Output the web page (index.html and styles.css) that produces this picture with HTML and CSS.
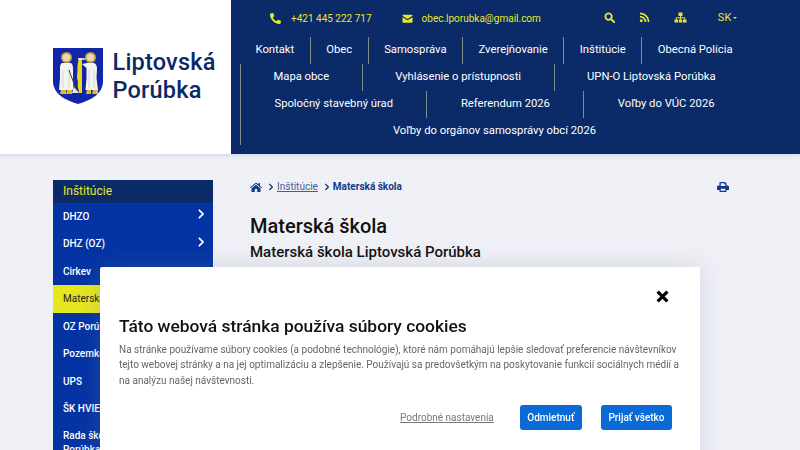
FILE: index.html
```html
<!DOCTYPE html>
<html lang="sk">
<head>
<meta charset="utf-8">
<title>Materská škola</title>
<link rel="stylesheet" href="styles.css">
</head>
<body>
<header class="site-header">
  <a class="brand">
    <svg class="crest" viewBox="0 0 50 56" width="50" height="56" aria-hidden="true">
      <path d="M0 0H50V33C50 46 38 52 25 56C12 52 0 46 0 33Z" fill="#1426a8"/>
      <circle cx="13.500" cy="9.500" r="5.500" fill="#b9a24a"/><circle cx="13.500" cy="9.500" r="3.800" fill="#ecd9a8"/>
      <circle cx="37.500" cy="9.500" r="5.500" fill="#b9a24a"/><circle cx="37.500" cy="9.500" r="3.800" fill="#ecd9a8"/>
      <path d="M9 15H18Q20 16 20 21L20 30L20.500 42H6L7 30L7 20Q7 16 9 15Z" fill="#f4f4ee"/>
      <path d="M34 15H41Q44 16 44 21L43.500 30L45 42H32.500L33.500 30L33.500 20L29 16L34 15Z" fill="#f4f4ee"/>
      <path d="M10 22V40M16 22V40M36 22V40M41 22V40" stroke="#c9c9bd" stroke-width=".7"/>
      <path d="M8 42H13V46H7ZM14 42H19V46H13ZM34 42H38V46H33ZM40 42H45V46H39Z" fill="#e0bd1c"/>
      <path d="M26 10H29V45H26C25.500 41 24 38 25 34C23.500 30 24 27 24.500 23C24 18 25 14 26 10Z" fill="#e8d81c"/>
      <path d="M25 11H32" stroke="#f4f4ee" stroke-width="1.500"/>
      <path d="M16 22L24 44" stroke="#44402a" stroke-width="1"/>
      <path d="M21 39L26 45H19Z" fill="#e6e6e2"/>
    </svg>
    <span class="brand-name">Liptovská<br>Porúbka</span>
  </a>
  <div class="header-panel">
    <div class="topbar">
      <span class="contact">
        <svg class="ico flip" viewBox="0 0 512 512"><path d="M493.4 24.6l-104-24c-11.3-2.6-22.9 3.3-27.5 13.9l-48 112c-4.2 9.8-1.4 21.3 6.9 28l60.6 49.6c-36 76.7-98.9 140.5-177.2 177.2l-49.6-60.6c-6.8-8.3-18.2-11.1-28-6.9l-112 48C3.9 366.5-2 378.1.6 389.4l24 104C27.1 504.2 36.7 512 48 512c256.1 0 464-207.5 464-464 0-11.2-7.7-20.9-18.6-23.4z"/></svg>
        <span>+421 445 222 717</span>
      </span>
      <span class="contact contact-mail">
        <svg class="ico" viewBox="0 0 24 24"><path d="M2 4H22Q23 4 23 6L12 13L1 6Q1 4 2 4ZM1 9L12 16L23 9V19Q23 21 21 21H3Q1 21 1 19Z"/></svg>
        <span>obec.lporubka@gmail.com</span>
      </span>
      <span class="tools">
        <svg class="ico" viewBox="0 0 24 24"><circle cx="10" cy="10" r="7" fill="none" stroke="currentColor" stroke-width="4"/><path d="M15 15L22 22" stroke="currentColor" stroke-width="4.500" stroke-linecap="round"/></svg>
        <svg class="ico" viewBox="0 0 24 24"><circle cx="5" cy="19" r="3.200"/><path d="M2 10A12 12 0 0 1 14 22M2 3A19 19 0 0 1 21 22" fill="none" stroke="currentColor" stroke-width="3.600"/></svg>
        <svg class="ico ico-wide" viewBox="0 0 26 22"><path d="M9 1H17V8H9ZM1 15H8V21H1ZM9.500 15H16.500V21H9.500ZM18 15H25V21H18Z"/><path d="M13 8V15M4.500 15V11.500H21.500V15" fill="none" stroke="currentColor" stroke-width="2"/></svg>
        <span class="lang">SK</span>
      </span>
    </div>
    <ul class="main-nav">
      <li>Kontakt</li><li>Obec</li><li>Samospráva</li><li>Zverejňovanie</li><li>Inštitúcie</li><li>Obecná Polícia</li>
      <li>Mapa obce</li><li>Vyhlásenie o prístupnosti</li><li>UPN-O Liptovská Porúbka</li>
      <li>Spoločný stavebný úrad</li><li>Referendum 2026</li><li>Voľby do VÚC 2026</li>
      <li>Voľby do orgánov samosprávy obcí 2026</li>
    </ul>
  </div>
</header>

<div class="page">
  <aside class="side">
    <div class="side-title">Inštitúcie</div>
    <ul class="side-list">
      <li>DHZO<svg class="chev" viewBox="0 0 8 12"><path d="M2 1L7 6L2 11" fill="none" stroke="currentColor" stroke-width="2"/></svg></li>
      <li>DHZ (OZ)<svg class="chev" viewBox="0 0 8 12"><path d="M2 1L7 6L2 11" fill="none" stroke="currentColor" stroke-width="2"/></svg></li>
      <li>Cirkev</li>
      <li class="active">Materská škola</li>
      <li>OZ Porúbka</li>
      <li>Pozemkové spol.</li>
      <li>UPS</li>
      <li>ŠK HVIEZDA</li>
      <li class="two-line">Rada školy<br>Porúbka</li>
    </ul>
  </aside>
  <main class="content">
    <div class="crumb-row">
      <nav class="crumbs">
        <svg class="home" viewBox="0 0 24 20"><path d="M12 1L17 5V2H20V7.500L24 11L22.800 12.500L12 3.500L1.200 12.500L0 11ZM12 5.500L21 13V20H14.500V14H9.500V20H3V13Z"/></svg>
        <svg class="sep" viewBox="0 0 8 12"><path d="M2 1L7 6L2 11" fill="none" stroke="currentColor" stroke-width="1.800"/></svg>
        <a class="crumb-link">Inštitúcie</a>
        <svg class="sep" viewBox="0 0 8 12"><path d="M2 1L7 6L2 11" fill="none" stroke="currentColor" stroke-width="1.800"/></svg>
        <b class="crumb-current">Materská škola</b>
      </nav>
      <svg class="print" viewBox="0 0 24 24"><path d="M5 9V2H16L19 5V9H22Q24 9 24 12V18H19V22H5V18H0V12Q0 9 2 9ZM7.500 4.500V10H16.500V6.500H14.500V4.500ZM7.500 15.500V19.500H16.500V15.500Z" fill-rule="evenodd"/></svg>
    </div>
    <h1 class="title">Materská škola</h1>
    <h2 class="subtitle">Materská škola Liptovská Porúbka</h2>
  </main>
</div>

<section class="cookie">
  <div class="cookie-close"><svg viewBox="0 0 12 12" width="13" height="13"><path d="M1.500 1.500L10.500 10.500M10.500 1.500L1.500 10.500" stroke="#000" stroke-width="3"/></svg></div>
  <h3 class="cookie-title">Táto webová stránka používa súbory cookies</h3>
  <p class="cookie-text">Na stránke používame súbory cookies (a podobné technológie), ktoré nám pomáhajú lepšie sledovať preferencie návštevníkov tejto webovej stránky a na jej optimalizáciu a zlepšenie. Používajú sa predovšetkým na poskytovanie funkcií sociálnych médií a na analýzu našej návštevnosti.</p>
  <div class="cookie-actions">
    <a class="cookie-link">Podrobné nastavenia</a>
    <button class="btn">Odmietnuť</button>
    <button class="btn">Prijať všetko</button>
  </div>
</section>
</body>
</html>
```

FILE: styles.css
```css
* { box-sizing: border-box; }
html, body { margin: 0; height: 450px; overflow: hidden; }
body { background: #f0f1f7; font-family: Roboto, "Liberation Sans", sans-serif; color: #111; }
ul { list-style: none; margin: 0; padding: 0; }

.site-header { display: flex; height: 154px; background: #fff; box-shadow: 0 2px 4px #d5dbea; position: relative; }
.brand { width: 231px; flex: none; display: flex; align-items: center; gap: 10px; padding: 0 0 2px 53px; }
.crest { flex: none; }
.brand-name { font-size: 23.500px; line-height: 28px; font-weight: 500; color: #0a2a66; letter-spacing: .2px; margin-left: -.5px; }

.header-panel { flex: 1; background: #0a2a68; padding: 0 52px 0 9px; }
.topbar { height: 37px; display: flex; align-items: center; padding-left: 30px; color: #e6e82a; font-size: 10px; white-space: nowrap; }
.contact { display: flex; align-items: center; gap: 10px; }
.contact-mail { margin-left: 30px; gap: 9px; }
.tools { display: flex; align-items: center; gap: 24px; margin-left: 63px; padding-bottom: 2px; }
.ico { width: 11px; height: 11px; fill: currentColor; flex: none; }
.ico-wide { width: 13px; }
.flip { transform: scaleX(-1); }
.lang { margin-left: 7px; display: flex; align-items: center; gap: 2px; font-size: 11px; }
.lang::after { content: ""; border: 2.500px solid transparent; border-top-color: currentColor; border-bottom: 0; }

.main-nav { display: flex; flex-wrap: wrap; }
.main-nav li { flex: 1 0 auto; height: 27px; line-height: 26px; padding: 0 15.500px; text-align: center; color: #fff; font-size: 11.250px; border-left: 1px solid #7d8f8a; }
.main-nav li:first-child { border-left: 0; }

.page { display: flex; padding: 26px 0 0 53px; }
.side { width: 160px; flex: none; }
.side-title { height: 22.500px; line-height: 22px; padding-left: 10px; background: #0a2a68; color: #e6e82a; font-size: 12px; }
.side-list li { height: 27.500px; display: flex; align-items: center; justify-content: space-between; padding: 0 9px 0 10px; background: #0433a3; color: #fff; font-size: 10px; font-weight: 500; white-space: nowrap; }
.side-list .active { background: #e6e61e; color: #222; font-weight: 400; }
.side-list .two-line { height: 44px; line-height: 14px; display: block; padding-top: 6px; }
.chev { width: 7px; height: 10px; margin-top: -4px; }

.content { flex: 1; padding: 0 71px 0 37px; }
.crumb-row { display: flex; justify-content: space-between; align-items: center; height: 13px; margin-bottom: 21px; }
.crumbs { display: flex; align-items: center; font-size: 10px; color: #0a2a68; }
.home { width: 12px; height: 10px; fill: #0f3c8c; }
.sep { width: 5px; height: 8px; margin: 0 4px 0 6px; }
.crumb-link { color: #3f5f9a; text-decoration: underline; }
.crumb-current { font-weight: 700; color: #0f3a8a; }
.print { width: 12px; height: 12px; fill: #0f3c8c; }
.title { margin: 0; font-size: 20px; line-height: 24px; font-weight: 500; color: #111; }
.subtitle { margin: 4px 0 0; font-size: 15px; line-height: 20px; font-weight: 500; color: #111; }

.cookie { position: fixed; left: 100px; top: 267px; width: 600px; height: 200px; padding: 23px 19px 0; background: #fff; box-shadow: 0 0 24px rgba(120,125,160,.25); border-radius: 2px; }
.cookie-close { display: flex; justify-content: flex-end; height: 14px; padding-right: 12px; }
.cookie-title { margin: 11px 0 0; font-size: 17.400px; line-height: 22px; font-weight: 500; color: #111; }
.cookie-text { margin: 5px 0 0; font-size: 10px; line-height: 15.300px; color: #666; }
.cookie-actions { display: flex; align-items: center; justify-content: flex-end; margin-top: 17.500px; padding-right: 9px; }
.cookie-link { font-size: 10px; color: #777; text-decoration: underline; margin-right: 26px; }
.btn { height: 25px; padding: 0 7.500px; border: 0; border-radius: 3px; background: #0a6bd6; color: #fff; font: 500 10px Roboto, sans-serif; }
.btn + .btn { margin-left: 19px; }
```
